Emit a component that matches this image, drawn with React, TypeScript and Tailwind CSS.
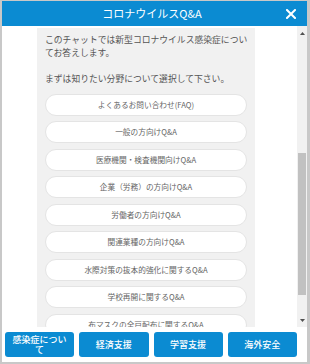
import React from "react";

const choices = [
  "よくあるお問い合わせ(FAQ)",
  "一般の方向けQ&A",
  "医療機関・検査機関向けQ&A",
  "企業（労務）の方向けQ&A",
  "労働者の方向けQ&A",
  "関連業種の方向けQ&A",
  "水際対策の抜本的強化に関するQ&A",
  "学校再開に関するQ&A",
  "布マスクの全戸配布に関するQ&A",
];

const footer = ["感染症について", "経済支援", "学習支援", "海外安全"];

export default function App() {
  return (
    <div className="w-[310px] h-[364px] bg-[#c8c8c8] pl-[2px] pt-[1px] pr-[3px] pb-[2px] font-['Noto_Sans_CJK_JP','Noto_Sans',sans-serif]">
      <div className="flex flex-col h-full bg-white">
        {/* header */}
        <div className="h-[25px] shrink-0 bg-[#0b8bd2] grid grid-cols-[1fr_auto_1fr] items-center">
          <div />
          <div className="text-white text-[11px] leading-none pr-[5px]">コロナウイルスQ&amp;A</div>
          <div className="flex justify-end pr-[11px]">
            <svg width="10" height="10" viewBox="0 0 10 10">
              <path d="M1 1 L9 9 M9 1 L1 9" stroke="white" strokeWidth="2" strokeLinecap="square" />
            </svg>
          </div>
        </div>

        {/* middle */}
        <div className="flex-1 flex min-h-0">
          <div className="flex-1 overflow-hidden">
            <div className="ml-[35px] mt-[2px] w-[218px] bg-[#f1f1f1] px-[8px] pt-[5px] pb-[10px]">
              <div className="text-[8.8px] leading-[13px] text-[#555] whitespace-nowrap">
                このチャットでは新型コロナウイルス感染症につい
                <br />
                てお答えします。
                <br />
                <br />
                まずは知りたい分野について選択して下さい。
              </div>
              <div className="mt-[8.5px] flex flex-col gap-[5.5px]">
                {choices.map((c) => (
                  <div
                    key={c}
                    className="h-[22px] rounded-full bg-white border border-[#e4e4e4] flex items-center justify-center text-[7.7px] text-[#666] whitespace-nowrap"
                  >
                    {c}
                  </div>
                ))}
              </div>
            </div>
          </div>
          {/* scrollbar */}
          <div className="w-[10px] shrink-0 bg-[#f1f1f1] flex flex-col">
            <div className="h-[14px] flex items-center justify-center">
              <svg width="5" height="3" viewBox="0 0 5 3">
                <path d="M0 3 L2.5 0 L5 3 Z" fill="#505050" />
              </svg>
            </div>
            <div className="flex-1 flex flex-col items-center">
              <div className="mt-[113px] w-[8px] h-[142px] bg-[#c1c1c1]" />
            </div>
            <div className="h-[14px] flex items-center justify-center">
              <svg width="5" height="3" viewBox="0 0 5 3">
                <path d="M0 0 L5 0 L2.5 3 Z" fill="#505050" />
              </svg>
            </div>
          </div>
        </div>

        {/* footer */}
        <div className="h-[35px] shrink-0 bg-white pl-[3px] pr-[10px] pt-[5px]">
          <div className="grid grid-cols-4 gap-[5px]">
            {footer.map((f) => (
              <div
                key={f}
                className="h-[25px] rounded-[3px] bg-[#0b8bd2] text-white text-[9px] leading-[9.5px] font-medium flex items-center justify-center text-center px-[6px]"
              >
                {f}
              </div>
            ))}
          </div>
        </div>
      </div>
    </div>
  );
}
